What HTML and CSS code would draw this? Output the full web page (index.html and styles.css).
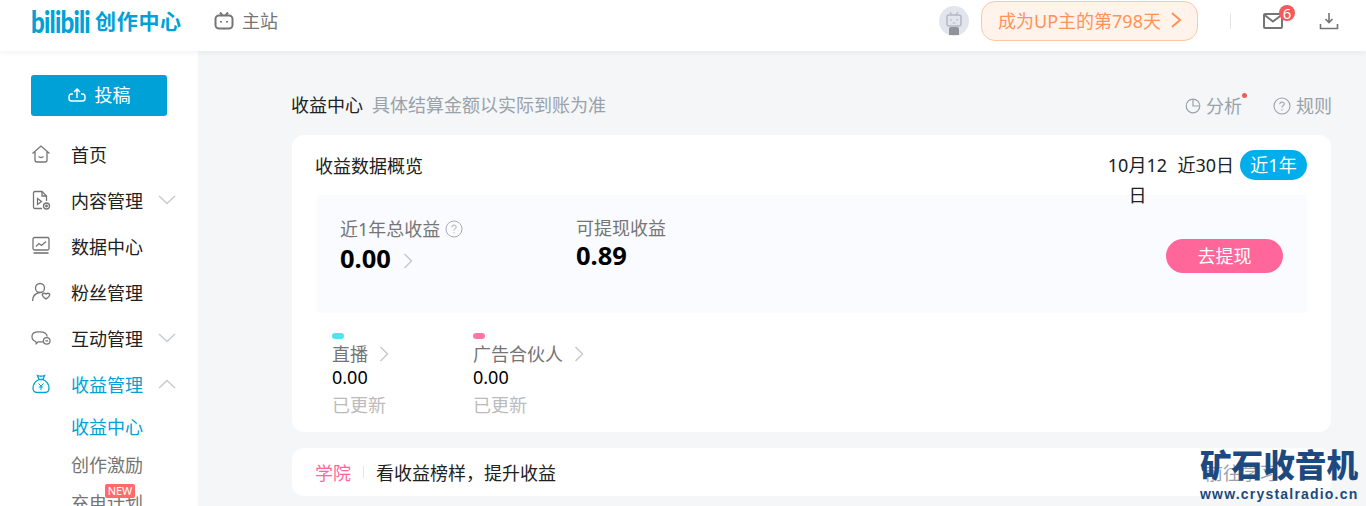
FILE: index.html
```html
<!DOCTYPE html>
<html lang="zh-CN">
<head>
    <meta charset="UTF-8">
    <meta name="viewport" content="width=device-width, initial-scale=1.0">
    <title>收益中心</title>
    <link rel="stylesheet" href="styles.css">
</head>
<body>
    <header class="topbar">
        <div class="brand">
            <span class="brand-mark">bilibili</span>
            <span class="brand-name">创作中心</span>
        </div>
        <a class="home-link">
            <svg class="icon-20" viewBox="0 0 20 20" fill="none" stroke="#757575" stroke-width="2"><rect x="1.5" y="4.5" width="17" height="13" rx="3.5"/><path d="M6 1.5l2.5 3M14 1.5l-2.5 3"/><path d="M7 10v1.5M13 10v1.5"/></svg>
            <span>主站</span>
        </a>
        <div class="topbar-right">
            <div class="avatar">
                <svg viewBox="0 0 30 30" width="30" height="30"><circle cx="15" cy="15" r="15" fill="#e3e5ee"/><rect x="8" y="9" width="14" height="11" rx="2" fill="none" stroke="#b4b8c4" stroke-width="1.5"/><path d="M11 6l2 3M19 6l-2 3M11 14h2M17 14h2M13.5 17h3" stroke="#b4b8c4" stroke-width="1.2" fill="none"/><path d="M10 29v-6q0-2 2-2h6q2 0 2 2v6z" fill="#8f939c"/></svg>
            </div>
            <div class="up-days">
                <span>成为UP主的第798天</span>
                <svg width="12" height="18" viewBox="0 0 12 18" fill="none" stroke="#ff9258" stroke-width="2"><path d="M2 2l8 7-8 7"/></svg>
            </div>
            <i class="topbar-sep"></i>
            <div class="mail">
                <svg width="20" height="16" viewBox="0 0 20 16" fill="none" stroke="#757575" stroke-width="2"><rect x="1" y="1" width="18" height="14" rx="1"/><path d="M1.5 2l8.5 6.5L18.5 2"/></svg>
                <span class="mail-count">6</span>
            </div>
            <svg class="download" width="20" height="18" viewBox="0 0 20 18" fill="none" stroke="#757575" stroke-width="1.6"><path d="M10 1v9M6.5 7l3.5 3.5L13.5 7"/><path d="M1.5 12v4.5h17V12"/></svg>
        </div>
    </header>

    <div class="layout">
        <aside class="sidebar">
            <button class="post-btn">
                <svg width="18" height="15" viewBox="0 0 18 15" fill="none" stroke="#fff" stroke-width="1.4"><path d="M9 11V2M6 5l3-3 3 3"/><path d="M5 7H3.5Q1 7 1 10v1.5Q1 14 3.5 14h11q2.5 0 2.5-2.5V10q0-3-2.5-3H13"/></svg>
                <span>投稿</span>
            </button>
            <nav class="menu">
                <div class="menu-item">
                    <svg class="menu-icon" viewBox="0 0 20 20" fill="none" stroke="#757575" stroke-width="1.3"><path d="M1.5 9.5L10 2l8.500 7.500M4 8v8q0 2 2 2h8q2 0 2-2V8"/><path d="M7.500 12.500q2.500 2 5 0"/></svg>
                    <span>首页</span>
                </div>
                <div class="menu-item">
                    <svg class="menu-icon" viewBox="0 0 20 20" fill="none" stroke="#757575" stroke-width="1.3"><path d="M11 18.500H4q-1.500 0-1.500-1.500V3q0-1.500 1.500-1.500h7l4.500 4.500v5"/><path d="M11 1.500v4.500h4.500"/><path d="M6.500 8.500l4 3-4 3z"/><circle cx="15.500" cy="16" r="3"/><circle cx="15.500" cy="16" r=".8"/></svg>
                    <span>内容管理</span>
                    <svg class="caret" viewBox="0 0 18 10" fill="none" stroke="#c9ccd0" stroke-width="1.6"><path d="M1 1l8 7.500L17 1"/></svg>
                </div>
                <div class="menu-item">
                    <svg class="menu-icon" viewBox="0 0 20 20" fill="none" stroke="#757575" stroke-width="1.3"><rect x="2" y="1.500" width="16" height="12.500" rx="1.500"/><path d="M5 10.500l3-3 2.500 2L15 5.500"/><path d="M2.500 17h15" stroke-width="1.6"/></svg>
                    <span>数据中心</span>
                </div>
                <div class="menu-item">
                    <svg class="menu-icon" viewBox="0 0 20 20" fill="none" stroke="#757575" stroke-width="1.3"><circle cx="9" cy="6" r="4.500"/><path d="M1.500 19q0-7 7-8.500"/><path d="M15 12q2-1.500 3.500 0 1 2-3.500 5-4.500-3-3.500-5 1.500-1.500 3.500 0z"/></svg>
                    <span>粉丝管理</span>
                </div>
                <div class="menu-item">
                    <svg class="menu-icon" viewBox="0 0 21 20" fill="none" stroke="#757575" stroke-width="1.3"><path d="M13 14H7.500l-2 2-.5-2.300Q1 12.500 1 8.500 1 3.500 8 3.500h1q7.500 0 8 5"/><circle cx="16.500" cy="13" r="3.500"/><path d="M15 13h3"/></svg>
                    <span>互动管理</span>
                    <svg class="caret" viewBox="0 0 18 10" fill="none" stroke="#c9ccd0" stroke-width="1.6"><path d="M1 1l8 7.500L17 1"/></svg>
                </div>
                <div class="menu-item is-open">
                    <svg class="menu-icon" viewBox="0 0 20 20" fill="none" stroke="#00a1d6" stroke-width="1.3"><path d="M6.500 1.500q3.500 1.500 7 0l-1.500 4H8z"/><path d="M8 5.500Q2 8.500 2 14q0 4.500 4 4.500h8q4 0 4-4.500 0-5.500-6-8.500"/><path d="M7.500 9.500L10 12l2.500-2.500M10 12v4M7.800 13h4.400" stroke-width="1"/></svg>
                    <span>收益管理</span>
                    <svg class="caret" viewBox="0 0 18 10" fill="none" stroke="#c9ccd0" stroke-width="1.6"><path d="M1 9l8-7.500L17 9"/></svg>
                </div>
                <a class="sub-item is-active">收益中心</a>
                <a class="sub-item">创作激励</a>
                <a class="sub-item">充电计划<em class="new-tag">NEW</em></a>
            </nav>
        </aside>

        <main class="content">
            <div class="page-head">
                <h2 class="page-title">收益中心</h2>
                <span class="page-note">具体结算金额以实际到账为准</span>
                <div class="page-links">
                    <a class="page-link">
                        <svg width="16" height="16" viewBox="0 0 16 16" fill="none" stroke="#99a2aa" stroke-width="1.2"><circle cx="8" cy="8" r="6.800"/><path d="M8 1.500V8h6.500"/></svg>
                        <span class="has-dot">分析</span>
                    </a>
                    <a class="page-link">
                        <svg width="18" height="18" viewBox="0 0 18 18" fill="none" stroke="#99a2aa" stroke-width="1.1"><circle cx="9" cy="9" r="8"/><path d="M6.800 7.200Q7 5 9 5q2.200 0 2.200 2 0 1.200-1.200 1.800-1 .5-1 1.700"/><path d="M9 12.200v1.200"/></svg>
                        <span>规则</span>
                    </a>
                </div>
            </div>

            <section class="card overview">
                <div class="overview-head">
                    <h3 class="card-title">收益数据概览</h3>
                    <div class="range-tabs">
                        <span class="range-tab range-date">10月12日</span>
                        <span class="range-tab">近30日</span>
                        <span class="range-tab is-active">近1年</span>
                    </div>
                </div>
                <div class="summary">
                    <div class="summary-col summary-total">
                        <div class="summary-label">
                            近1年总收益
                            <svg width="18" height="18" viewBox="0 0 18 18" fill="none" stroke="#a9adb3" stroke-width="1"><circle cx="9" cy="9" r="8"/><path d="M6.800 7.200Q7 5 9 5q2.200 0 2.200 2 0 1.200-1.200 1.800-1 .5-1 1.700"/><path d="M9 12.200v1.200"/></svg>
                        </div>
                        <div class="summary-value">
                            0.00
                            <svg class="value-arrow" width="10" height="16" viewBox="0 0 10 16" fill="none" stroke="#c9ccd0" stroke-width="1.6"><path d="M1.500 1l7 7-7 7"/></svg>
                        </div>
                    </div>
                    <div class="summary-col">
                        <div class="summary-label">可提现收益</div>
                        <div class="summary-value">0.89</div>
                    </div>
                    <button class="withdraw-btn">去提现</button>
                </div>
                <div class="sources">
                    <div class="source source-live">
                        <i class="source-dot dot-cyan"></i>
                        <div class="source-name">直播
                            <svg width="10" height="16" viewBox="0 0 10 16" fill="none" stroke="#c9ccd0" stroke-width="1.6"><path d="M1.500 1l7 7-7 7"/></svg>
                        </div>
                        <div class="source-value">0.00</div>
                        <div class="source-state">已更新</div>
                    </div>
                    <div class="source">
                        <i class="source-dot dot-pink"></i>
                        <div class="source-name">广告合伙人
                            <svg width="10" height="16" viewBox="0 0 10 16" fill="none" stroke="#c9ccd0" stroke-width="1.6"><path d="M1.500 1l7 7-7 7"/></svg>
                        </div>
                        <div class="source-value">0.00</div>
                        <div class="source-state">已更新</div>
                    </div>
                </div>
            </section>

            <section class="card academy">
                <span class="academy-tag">学院</span>
                <i class="academy-sep"></i>
                <span class="academy-text">看收益榜样，提升收益</span>
                <a class="academy-link">前往学习</a>
            </section>
        </main>
    </div>

    <div class="watermark">
        <div class="watermark-cn">矿石收音机</div>
        <div class="watermark-url">www.crystalradio.cn</div>
    </div>
</body>
</html>
```

FILE: styles.css
```css
* {
    box-sizing: border-box;
}

html, body {
    height: 506px;
}

body {
    margin: 0;
    overflow: hidden;
    font-family: "Noto Sans", "Noto Sans CJK SC", sans-serif;
    font-size: 18px;
    color: #212121;
    background-color: #f5f6f8;
}

svg {
    flex-shrink: 0;
}

/* top bar */
.topbar {
    position: relative;
    z-index: 2;
    height: 51px;
    display: flex;
    align-items: center;
    padding: 0 0 9px 31px;
    background-color: #fff;
    box-shadow: 0 2px 6px rgba(0, 0, 0, 0.05);
}

.brand {
    width: 183px;
    display: flex;
    align-items: center;
    gap: 5px;
    color: #00a1d6;
}

.brand-mark {
    width: 59px;
    font-family: "Lato", sans-serif;
    font-size: 31px;
    font-weight: 900;
    line-height: 30px;
    letter-spacing: -1px;
    transform: scaleX(0.78);
    transform-origin: left center;
}

.brand-name {
    margin-top: -2px;
    font-size: 21px;
    font-weight: 700;
    letter-spacing: 0.7px;
}

.home-link {
    display: flex;
    align-items: center;
    gap: 8px;
    color: #757575;
}

.home-link span {
    margin-top: -2px;
}

.icon-20 {
    width: 20px;
    height: 20px;
}

.topbar-right {
    margin-left: auto;
    display: flex;
    align-items: center;
    padding-right: 27px;
}

.avatar {
    width: 30px;
    height: 30px;
    margin-right: 12px;
}

.up-days {
    width: 217px;
    height: 40px;
    padding: 0 15px 2px 16px;
    display: flex;
    align-items: center;
    justify-content: space-between;
    color: #ff9258;
    background-color: #fff3ec;
    border: 1px solid #ffc5a6;
    border-radius: 14px;
}

.topbar-sep {
    width: 1px;
    height: 16px;
    margin: 0 32px;
    background-color: #e3e5e7;
}

.mail {
    position: relative;
    width: 20px;
    height: 16px;
    margin-right: 36px;
    display: flex;
}

.mail-count {
    position: absolute;
    top: -8px;
    left: 16px;
    width: 16px;
    height: 16px;
    border-radius: 50%;
    background-color: #f45a5a;
    color: #fff;
    font-size: 15px;
    line-height: 16px;
    text-align: center;
}

/* page frame */
.layout {
    display: flex;
    height: 455px;
}

.sidebar {
    width: 198px;
    flex-shrink: 0;
    padding-top: 24px;
    background-color: #fff;
    overflow: hidden;
}

.post-btn {
    width: 136px;
    height: 41px;
    margin-left: 31px;
    padding: 0 0 3px;
    display: flex;
    align-items: center;
    justify-content: center;
    gap: 9px;
    border: none;
    border-radius: 3px;
    background-color: #00a1d6;
    color: #fff;
    font: inherit;
}

.menu {
    margin-top: 15px;
}

.menu-item {
    height: 46px;
    padding-left: 31px;
    display: flex;
    align-items: center;
}

.menu-icon {
    width: 20px;
    height: 20px;
    margin-right: 20px;
}

.caret {
    width: 18px;
    height: 10px;
    margin-left: 15px;
}

.menu-item.is-open {
    color: #00a1d6;
    margin-bottom: 1px;
}

.sub-item {
    position: relative;
    display: block;
    height: 38px;
    line-height: 38px;
    padding-left: 71px;
    color: #757575;
}

.sub-item.is-active {
    color: #00a1d6;
}

.new-tag {
    position: absolute;
    top: 0;
    left: 105px;
    width: 30px;
    height: 14px;
    border-radius: 2px;
    background-color: #ff6b6b;
    color: #fff;
    font-size: 11px;
    font-style: normal;
    line-height: 14px;
    text-align: center;
}

/* main column */
.content {
    width: 1133px;
    padding-left: 94px;
}

.page-head {
    height: 84px;
    padding-top: 29px;
    display: flex;
    line-height: 52px;
}

.page-title {
    margin: -1px 9px 0 -1px;
    font-size: 18px;
    font-weight: 400;
}

.page-note {
    margin-top: -1px;
    color: #99a2aa;
}

.page-links {
    margin: 1px -1px 0 auto;
    height: 50px;
    display: flex;
    gap: 31px;
    color: #99a2aa;
}

.page-link {
    display: flex;
    align-items: center;
    gap: 5px;
}

.has-dot {
    position: relative;
}

.has-dot::after {
    content: "";
    position: absolute;
    top: 13px;
    right: -5px;
    width: 5px;
    height: 5px;
    border-radius: 50%;
    background-color: #f45a5a;
}

.card {
    background-color: #fff;
    border-radius: 12px;
}

.overview {
    height: 297px;
}

.overview-head {
    height: 60px;
    padding: 15px 24px 0 23px;
    display: flex;
    justify-content: space-between;
    align-items: flex-start;
}

.card-title {
    margin: 0;
    font-size: 18px;
    font-weight: 400;
    line-height: 32px;
}

.range-tabs {
    display: flex;
    align-items: flex-start;
    line-height: 30px;
}

.range-tab {
    margin-left: 6px;
    text-align: center;
}

.range-date {
    width: 60px;
    margin-right: 4px;
}

.range-tab.is-active {
    width: 67px;
    border-radius: 15px;
    background-color: #00aeec;
    color: #fff;
}

.summary {
    height: 118px;
    margin: 0 24px 0 25px;
    padding: 20px 24px 0 23px;
    display: flex;
    background-color: #fafbfe;
    border-radius: 4px;
}

.summary-col {
    width: 260px;
}

.summary-total {
    width: 236px;
    padding-top: 1px;
}

.summary-label {
    display: flex;
    align-items: center;
    gap: 5px;
    line-height: 26px;
    color: #757575;
}

.summary-value {
    margin-top: -1px;
    display: flex;
    align-items: center;
    gap: 12px;
    font-size: 25.5px;
    font-weight: 700;
    line-height: 30px;
    color: #000;
}

.summary-total .summary-value {
    margin-top: 1px;
}

.value-arrow {
    margin-top: 6px;
}

.withdraw-btn {
    width: 117px;
    height: 34px;
    margin: 24px 0 0 auto;
    padding: 0 0 2px;
    border: none;
    border-radius: 17px;
    background-color: #ff6699;
    color: #fff;
    font: inherit;
}

.sources {
    padding: 20px 0 0 40px;
    display: flex;
}

.source-live {
    width: 141px;
}

.source-dot {
    display: block;
    width: 12px;
    height: 6px;
    margin-bottom: 3px;
    border-radius: 3px;
}

.dot-cyan {
    background-color: #4ee4ee;
}

.dot-pink {
    background-color: #ff76a6;
}

.source-name {
    display: flex;
    align-items: center;
    gap: 11px;
    line-height: 24px;
    color: #757575;
}

.source-value {
    line-height: 22px;
    color: #000;
}

.source-state {
    line-height: 34px;
    color: #bbb;
}

.academy {
    height: 48px;
    margin-top: 16px;
    padding: 0 54px 0 23px;
    display: flex;
    align-items: center;
}

.academy-tag {
    color: #ff6699;
}

.academy-sep {
    width: 1px;
    height: 12px;
    margin: 0 12px;
    background-color: #e3e5e7;
}

.academy-link {
    margin-left: auto;
    color: #99a2aa;
}

/* site stamp laid over the page */
.watermark {
    position: absolute;
    top: 442px;
    left: 1200px;
    width: 160px;
    color: #1c4a80;
}

.watermark-cn {
    font-family: "Noto Sans CJK SC", sans-serif;
    font-size: 31.6px;
    font-weight: 900;
    line-height: 42px;
    white-space: nowrap;
}

.watermark-url {
    margin-top: 2px;
    font-family: "Liberation Sans", sans-serif;
    font-size: 14px;
    font-weight: 700;
    line-height: 16px;
    letter-spacing: 1.2px;
    white-space: nowrap;
}
```
